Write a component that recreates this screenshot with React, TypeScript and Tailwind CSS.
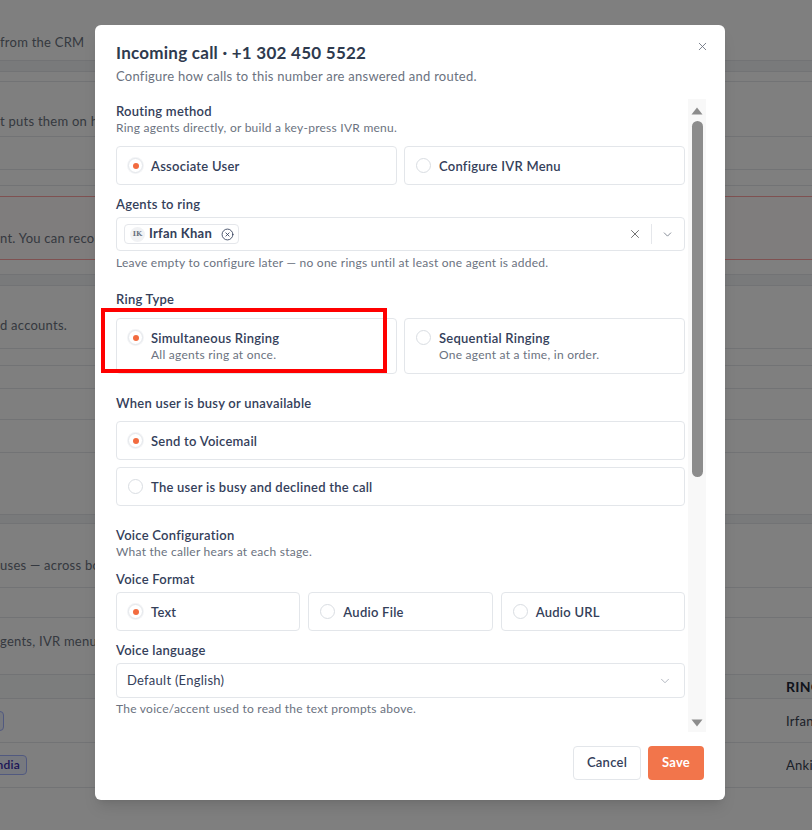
import { X, CircleX, ChevronDown } from "lucide-react";

const FONT = { fontFamily: "Lato, 'Open Sans', sans-serif", letterSpacing: "0.25px" };

function Radio({ checked }: { checked?: boolean }) {
  return (
    <span
      className={
        "flex h-[15px] w-[15px] shrink-0 items-center justify-center rounded-full border bg-white " +
        (checked ? "border-[#e4e7eb] shadow-[0_0_0_1px_#f3f4f6]" : "border-[#d9dde2]")
      }
    >
      {checked && <span className="h-[6px] w-[6px] rounded-full bg-[#f26b3f]" />}
    </span>
  );
}

function OptionCard({
  label,
  desc,
  checked,
  className,
}: {
  label: string;
  desc?: string;
  checked?: boolean;
  className?: string;
}) {
  return (
    <div
      className={
        "flex rounded-[4px] border border-[#e3e6ea] bg-white px-[11px] " +
        (desc ? "items-start pt-[10px] pb-[10px] " : "h-[39px] items-center ") +
        (className ?? "")
      }
    >
      <div className={desc ? "mt-[1px]" : ""}>
        <Radio checked={checked} />
      </div>
      <div className="ml-[8px] flex flex-col">
        <span className="text-[13px] leading-[18px] font-semibold text-[#34405a]">{label}</span>
        {desc && <span className="text-[12px] leading-[16px] text-[#6b7280]">{desc}</span>}
      </div>
    </div>
  );
}

function Label({ children, className }: { children: React.ReactNode; className?: string }) {
  return (
    <div className={"text-[13px] leading-[18px] font-semibold text-[#34405a] " + (className ?? "")}>
      {children}
    </div>
  );
}

function Hint({ children, className }: { children: React.ReactNode; className?: string }) {
  return <div className={"text-[12px] leading-[16px] text-[#6b7280] " + (className ?? "")}>{children}</div>;
}

function Background() {
  return (
    <div className="flex flex-col text-[13px] leading-[18px] text-[#6b7280]">
      <div className="h-[61px] border-b border-gray-200 pt-[33px]">from the CRM</div>
      <div className="h-[11px] border-b border-gray-200 bg-gray-100" />
      <div className="h-[10px] border-b border-gray-200" />
      <div className="h-[55px] border-b border-gray-200 pt-[30px]">t puts them on hold while the agent is busy</div>
      <div className="h-[33px] border-b border-gray-200" />
      <div className="h-[16px] border-b border-gray-200" />
      <div className="h-[11px] border-b border-red-300" />
      <div className="h-[63px] border-b border-red-300 bg-red-50/40 pt-[32px]">nt. You can reconnect it anytime</div>
      <div className="h-[15px] border-b border-gray-200" />
      <div className="h-[11px] border-b border-gray-200 bg-gray-100" />
      <div className="h-[63px] border-b border-gray-200 pt-[30px]">d accounts.</div>
      <div className="h-[17px] border-b border-gray-200" />
      <div className="h-[23px] border-b border-gray-200" />
      <div className="h-[31px] border-b border-gray-200" />
      <div className="h-[33px] border-b border-gray-200" />
      <div className="h-[62px] border-b border-gray-200" />
      <div className="h-[9px] border-b border-gray-200 bg-gray-100" />
      <div className="h-[64px] border-b border-gray-200 pt-[32px]">uses — across both numbers</div>
      <div className="h-[30px] border-b border-gray-200" />
      <div className="h-[57px] border-b border-gray-200 pt-[14px]">gents, IVR menu, and voicemail</div>
      <div className="flex h-[24px] items-center justify-end border-b border-gray-200 bg-gray-50">
        <span className="w-[26px] overflow-hidden whitespace-nowrap text-[14px] font-bold text-[#1f2937]">RING TYPE</span>
      </div>
      <div className="flex h-[44px] items-center justify-between border-b border-gray-200">
        <span className="ml-[-38px] rounded-[4px] border border-indigo-300 bg-indigo-50 px-[6px] text-[12px] leading-[18px] font-semibold text-indigo-800">
          Sales
        </span>
        <span className="w-[26px] overflow-hidden whitespace-nowrap text-[#374151]">Irfan Khan</span>
      </div>
      <div className="flex h-[45px] items-center justify-between border-b border-gray-200">
        <span className="ml-[-14px] rounded-[4px] border border-indigo-300 bg-indigo-50 px-[6px] text-[12px] leading-[18px] font-semibold text-indigo-800">
          India
        </span>
        <span className="w-[26px] overflow-hidden whitespace-nowrap text-[#374151]">Ankit Rao</span>
      </div>
    </div>
  );
}

export default function App() {
  return (
    <div className="relative h-[830px] w-[812px] overflow-hidden bg-white" style={FONT}>
      <Background />

      {/* overlay + modal */}
      <div className="absolute inset-0 bg-black/50 pl-[95px] pt-[25px]">
        <div className="relative flex h-[775px] w-[630px] flex-col rounded-[6px] bg-white shadow-lg">
          <button className="absolute right-[16px] top-[15px] text-[#6b7280]">
            <X size={13} strokeWidth={1.6} />
          </button>

          {/* header */}
          <div className="px-[21px] pt-[16px] pb-[14px]">
            <div className="text-[17px] leading-[24px] font-bold text-[#2e3a4e]">Incoming call · +1 302 450 5522</div>
            <div className="mt-[2px] text-[13px] leading-[18px] text-[#6b7280]">
              Configure how calls to this number are answered and routed.
            </div>
          </div>

          {/* body */}
          <div className="flex h-[633px] pr-[19px]">
            <div className="w-[590px] overflow-hidden pl-[21px] pt-[3px]">
              <Label>Routing method</Label>
              <Hint>Ring agents directly, or build a key-press IVR menu.</Hint>
              <div className="mt-[10px] grid grid-cols-2 gap-[7px]">
                <OptionCard label="Associate User" checked />
                <OptionCard label="Configure IVR Menu" />
              </div>

              <Label className="mt-[10px]">Agents to ring</Label>
              <div className="mt-[4px] flex h-[34px] items-center rounded-[4px] border border-[#e3e6ea] pl-[7px] pr-[10px]">
                <div className="flex h-[20px] items-center rounded-[4px] border border-[#e5e7eb] pl-[5px] pr-[4px]">
                  <span
                    className="flex h-[15px] w-[15px] items-center justify-center rounded-full bg-[#f1f2f4] text-[7px] font-bold text-[#6b7280]"
                    style={{ fontFamily: "'DejaVu Serif', serif", letterSpacing: 0 }}
                  >
                    IK
                  </span>
                  <span className="ml-[4px] text-[13px] font-bold text-[#34405a]">Irfan Khan</span>
                  <CircleX size={13} strokeWidth={1.6} className="ml-[9px] text-[#34405a]" />
                </div>
                <div className="ml-auto flex items-center">
                  <X size={14} strokeWidth={1.4} className="text-[#555]" />
                  <span className="mx-[9px] h-[20px] w-px bg-[#e5e7eb]" />
                  <ChevronDown size={13} strokeWidth={1.5} className="text-[#6b7280]" />
                </div>
              </div>
              <Hint className="mt-[4px]">Leave empty to configure later — no one rings until at least one agent is added.</Hint>

              <Label className="mt-[19px]">Ring Type</Label>
              <div className="relative mt-[10px] grid grid-cols-2 gap-[7px]">
                <OptionCard label="Simultaneous Ringing" desc="All agents ring at once." checked />
                <OptionCard label="Sequential Ringing" desc="One agent at a time, in order." />
                <div className="pointer-events-none absolute left-[-15px] top-[-10px] h-[65px] w-[286px] border-4 border-[#ff0000]" />
              </div>

              <Label className="mt-[20px]">When user is busy or unavailable</Label>
              <div className="mt-[9px] flex flex-col gap-[7px]">
                <OptionCard label="Send to Voicemail" checked />
                <OptionCard label="The user is busy and declined the call" />
              </div>

              <Label className="mt-[20px]">Voice Configuration</Label>
              <Hint>What the caller hears at each stage.</Hint>
              <Label className="mt-[10px]">Voice Format</Label>
              <div className="mt-[4px] grid grid-cols-3 gap-[8px]">
                <OptionCard label="Text" checked />
                <OptionCard label="Audio File" />
                <OptionCard label="Audio URL" />
              </div>

              <Label className="mt-[10px]">Voice language</Label>
              <div className="mt-[4px] flex h-[35px] items-center justify-between rounded-[4px] border border-[#e3e6ea] pl-[10px] pr-[12px]">
                <span className="text-[13px] text-[#34405a]">Default (English)</span>
                <ChevronDown size={14} strokeWidth={1.3} className="text-[#9ca3af]" />
              </div>
              <Hint className="mt-[3px]">The voice/accent used to read the text prompts above.</Hint>
              <Label className="mt-[12px]">Welcome message</Label>
            </div>

            {/* scrollbar */}
            <div className="ml-[3px] flex w-[18px] flex-col items-center bg-[#f8f8f8] pt-[8px] pb-[5px]">
              <svg width="12" height="8" viewBox="0 0 12 8" className="shrink-0">
                <path d="M6 0.5 L11.5 7.5 H0.5 Z" fill="#8c8c8c" />
              </svg>
              <div className="mt-[6px] h-[356px] w-[11px] rounded-full bg-[#8c8c8c]" />
              <div className="flex-1" />
              <svg width="12" height="8" viewBox="0 0 12 8" className="shrink-0">
                <path d="M0.5 0.5 H11.5 L6 7.5 Z" fill="#8c8c8c" />
              </svg>
            </div>
          </div>

          {/* footer */}
          <div className="flex justify-end gap-[7px] pt-[14px] pr-[21px]">
            <button className="h-[34px] w-[68px] rounded-[4px] border border-[#e3e6ea] bg-white text-[13px] font-semibold text-[#34405a]">
              Cancel
            </button>
            <button className="h-[34px] w-[56px] rounded-[4px] bg-[#f2754b] text-[13px] font-bold text-white">
              Save
            </button>
          </div>
        </div>
      </div>
    </div>
  );
}
